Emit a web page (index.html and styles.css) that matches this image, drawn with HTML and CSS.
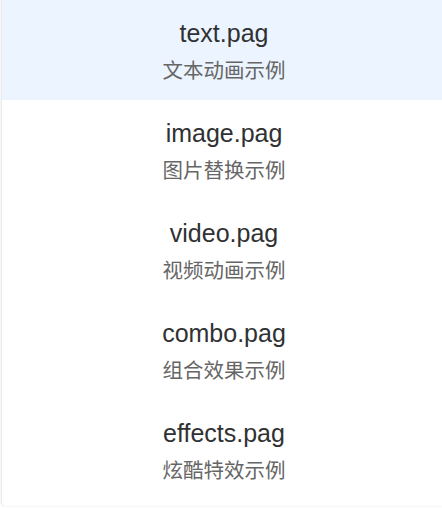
FILE: index.html
```html
<!DOCTYPE html>
<html>
<head>
<meta charset="utf-8">
<link rel="stylesheet" href="styles.css">
</head>
<body>
<div class="panel">
  <div class="item active">
    <div class="title">text.pag</div>
    <div class="desc">文本动画示例</div>
  </div>
  <div class="item">
    <div class="title">image.pag</div>
    <div class="desc">图片替换示例</div>
  </div>
  <div class="item">
    <div class="title">video.pag</div>
    <div class="desc">视频动画示例</div>
  </div>
  <div class="item">
    <div class="title">combo.pag</div>
    <div class="desc">组合效果示例</div>
  </div>
  <div class="item">
    <div class="title">effects.pag</div>
    <div class="desc">炫酷特效示例</div>
  </div>
</div>
</body>
</html>
```
FILE: styles.css
```css
html, body {
  margin: 0;
  padding: 0;
  background: #ffffff;
}
body {
  width: 442px;
  height: 508px;
  overflow: hidden;
}
.panel {
  margin-left: 2px;
  width: 444px;
  height: 506px;
  background: #ffffff;
  border-radius: 0 0 4px 4px;
  box-shadow: -1px 0 2px rgba(0, 0, 0, 0.12);
  display: flex;
  flex-direction: column;
}
.item {
  height: 100px;
  box-sizing: border-box;
  padding-top: 18px;
  display: flex;
  flex-direction: column;
  align-items: center;
  gap: 7px;
}
.item.active {
  background: #ecf5ff;
}
.title {
  font-family: "Liberation Sans", Arial, sans-serif;
  font-size: 25px;
  line-height: 30px;
  color: #303133;
}
.desc {
  font-family: "Noto Sans CJK SC", sans-serif;
  font-size: 20.5px;
  line-height: 28px;
  color: #666666;
}
```
